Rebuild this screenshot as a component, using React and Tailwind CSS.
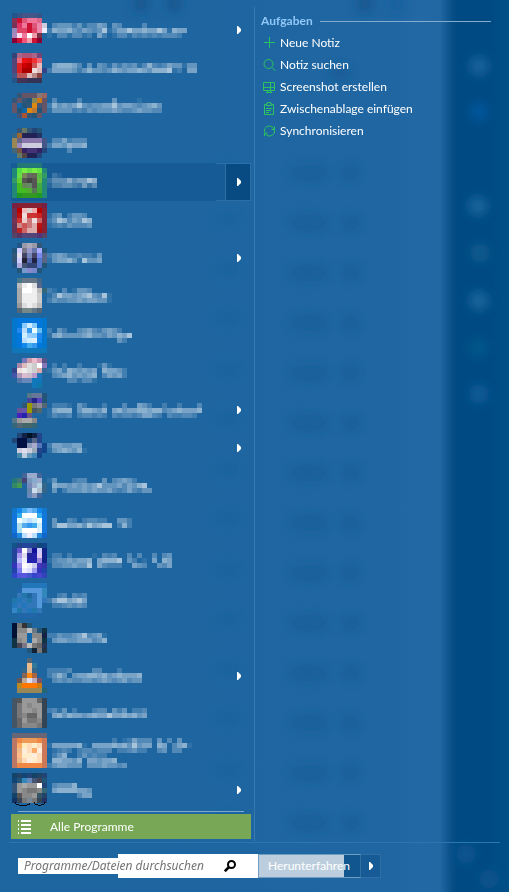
import React from "react";

// Each programme has a censored tile: `icon` holds one colour per 5px cell,
// `text` holds one brightness digit per 5px cell. `iy` and `ty` are the first
// cell row, measured from the top of the 38px list row.
const programs = [
  { iy: 2, icon: ["258 358 458 458 458 358 ...", "835 c13 d57 e79 e79 d68 ...", "735 d36 e79 c13 d57 e8a ccd", "98b d46 d46 c13 d46 e8a eef", "a8b fde e79 fff e9a 734 ...", "803 c13 e57 e9a c13 803 ..."], ty: 12, text: ["03444241335404300003", "2655643543471355755655751655", "1033133120520133132323233320"], menu: true },
  { iy: 4, icon: ["347 a68 a57 a57 a68 747 ...", "547 e67 e11 d11 e33 e67 ...", "547 d22 c00 b00 c55 ebb ...", "547 d22 a00 a00 edd dbb 348", "458 b55 b55 dbb b88 844 ...", "258 435 435 335 335 335 ..."], ty: 14, text: ["0566653040431424341363235441440", "2555542464434654556546667120550"] },
  { iy: 6, icon: ["... 357 656 656 656 877 966", "357 656 357 257 885 c71 656", "656 16a 257 357 d81 457 656", "656 257 16a d81 b73 257 656", "... 457 a53 357 257 656 ..."], ty: 11, text: ["0300003000000400001", "26454574344557455434564", "14444232434445433454433"] },
  { iy: 3, icon: ["... 357 676 357 247 257 ...", "368 963 225 225 225 236 ...", "985 668 87a 87a 87a 87a 458", "985 98b ccd ccd ccd ccd 458", "467 754 326 437 437 326 247", "... 676 544 225 225 247 ..."], ty: 13, text: ["03352333", "25546556", "00003"] },
  { iy: 0, icon: ["... 277 277 277 277 277 ...", "287 5d4 7e4 6d4 7e4 6d4 287", "287 6d4 785 666 665 5b4 396", "396 6c3 555 444 555 6b4 287", "287 4b2 685 686 555 4a4 287", "287 4b2 4b2 5a3 575 4a3 287", "287 292 392 392 392 292 287"], ty: 10, text: ["021", "2444645576", "1334432524"], menu: true, active: true },
  { iy: 2, icon: ["724 823 823 823 823 823 724", "635 b00 ebb dcc eaa b00 823", "635 b11 edd c33 c33 c22 823", "735 c33 ecc c77 edd c66 823", "635 c88 c55 c77 daa b11 823", "635 b22 c66 daa daa a11 823", "546 536 547 547 547 537 546"], ty: 12, text: ["134024430", "247635476", "123243334"] },
  { iy: 4, icon: ["... 258 99a aab 99a 357 ...", "257 ccf 778 99c 67a aaf 257", "357 dde 446 78b 446 78e 568", "357 ccf 223 56a 224 57c 568", "258 aad 457 347 347 57c 257", "... 257 79c 88c 78c 257 ..."], ty: 14, text: ["24542232214", "14556417445"], menu: true },
  { iy: 1, icon: ["... 478 678 678 678 468 ...", "... bbb eee fff ddd 568 ...", "... aaa fff fff eee bbb 367", "... aaa eee eee eee ccc ...", "... aaa eee eee eee ccc ...", "... 999 ddd eee ddd bbb ...", "... 567 788 788 678 567 ..."], ty: 11, text: ["2103014430", "1375545674371", "2433445455441"] },
  { iy: 3, icon: ["07c 07d 07d 07d 07d 07d 07c", "07c 07d 8cf cef 8cf 07d 07c", "07c 28e bdf 39e eff 6be 07c", "07c 07d cef 9cf 8cf 28e 07c", "07c 07d bdf cef def 18e 07c", "07c 07d 18e 4ae 39e 07d 07c", "17b 17b 17b 17b 17b 17b 17b"], ty: 13, text: ["20420034532454200", "15644445644354657", "00000000000000420"] },
  { iy: 5, icon: ["... ... 77b c9a ebc c9b 558", "... a8a dbb ddd ccc fff 87b", "348 edd eee ddd ccc daa 369", "45a a9b dbc cbc b9c 27b ...", "... 57a 68b 68b 17b 17b ...", "... ... ... ... 17b 17a ..."], ty: 10, text: ["0202002000141", "1452654545065542", "0345645456035452", "0000331331"] },
  { iy: 2, icon: ["... ... ... 578 679 679 257", "... ... ... 449 228 54b 257", "... ... 357 990 777 889 567", "... 659 65a 990 456 566 ...", "... 42b 22a 658 ... ... ...", "578 999 aaa aaa 888 ... ...", "367 567 466 466 367 ... ..."], ty: 12, text: ["0222104200020003005420020020003", "1566604665460564556656634565556", "132230233232032332355320322332"], menu: true },
  { iy: 4, icon: ["... 247 124 012 124 248 ...", "247 014 014 247 568 248 ...", "... 014 014 89b aac 57b 148", "... ccd dde ccd 9ab 248 148", "... 48a bcd 69b 48b 148 ..."], ty: 14, text: ["2554455", "14565461"], menu: true },
  { iy: 6, icon: ["... ... 469 9ac 9ac 469 ...", "277 477 447 79b 8ac 9ac 269", "386 495 ... 78b 9ac acd 368", "... ... ... 68a cde abc 368", "... ... ... 68b 89b 469 ..."], ty: 11, text: ["14000233000403454200", "065545454574445354670", "040244454544532353244"] },
  { iy: 3, icon: ["17c 18e 4ae 7bf 5ae 18e 17c", "17d 3ae fff fff fff 3ae 17d", "17d eff cef bdf cef eff 17d", "17d ade 5ae 39e 4ae cef 17d", "17d ade fff fff fff def 17d", "16c 28d bdf eef bdf 28d 16c"], ty: 13, text: ["04003202332200442", "04775564756770262"] },
  { iy: 0, icon: ["158 248 249 249 248 147 148", "249 65c fff 88c 119 ccf 128", "249 a9e dde 229 22a dce 128", "249 bbf eef 22a 22a 98d 128", "33b 98e fff eef cce 43b 33a", "24a 77e eef ddf 99e 33b 24a", "34c 55d 55d 45c 34c 44c 34b"], ty: 10, text: ["0220200001032300303003034", "1344545560566670420105065", "0334454470532220054300435"] },
  { iy: 2, icon: ["... ... 27b 27b 27b 27b 27b", "... 26a 59d 59d 59d 59d 38b", "... 37b 27a ... 37b 59d 38b", "27a 27b 37b 27a 37b 59d 37b", "27b 37b 27b 37b 37b 59d ...", "38c 27a 37b 27b 27a 37b ...", "... 26a 26a 26a 26a ... ..."], ty: 12, text: ["00230323", "25775675", "02234343"] },
  { iy: 4, icon: ["013 777 333 257 ... ... ...", "013 888 888 bbb 678 257 134", "013 999 999 16a 888 888 124", "134 888 999 16a aaa 888 134", "134 445 778 bbb 777 666 235", "... ... ... 257 123 777 234"], ty: 14, text: ["224334573451", "045544555346"] },
  { iy: 1, icon: ["... ... ... 567 ... ... ...", "... ... ... eb8 379 ... ...", "... ... 368 db9 368 ... ...", "... ... 865 f81 a64 ... ...", "... 655 ba9 dde bab 756 ...", "... b82 f70 f70 f70 c71 ...", "... 985 985 985 985 985 267"], ty: 11, text: ["222230000330002", "2464045566564565556", "0343433443454345344"], menu: true },
  { iy: 3, icon: ["456 555 999 999 999 666 345", "456 777 999 888 999 999 345", "456 777 999 999 888 999 345", "456 777 888 666 666 999 345", "456 666 999 777 777 888 345", "456 666 888 888 888 777 345"], ty: 13, text: ["23140200023304240223", "05646554565575565645"] },
  { iy: 0, icon: ["667 667 667 667 667 667 667", "b76 e84 e95 e95 e95 e84 c75", "b76 fa6 feb fdb fec fdb c75", "b76 eb8 fed fdb fa6 fed c75", "b76 fb8 fec fec fed fdb c75", "b76 eb8 fdb fed fec fdb c75", "b76 e84 e84 e84 e84 e84 c75"], ty: 5, text: ["0000000000000201253330403040", "155555610555565647455065035610", "0123202332333022342200340330", "02460024232200", "0665546055455600", "2455444044454434"] },
  { iy: 2, icon: ["146 246 147 247 146 246 247", "147 257 38b 68b 457 445 257", "357 999 aaa 999 999 fff 247", "357 999 888 777 777 888 367", "146 555 888 888 999 356 246", "136 345 777 789 777 345 236"], ty: 12, text: ["034446", "056666554", "000000355"], menu: true, feet: true },
];

const levels = [0, 0.08, 0.16, 0.23, 0.31, 0.4, 0.49, 0.61];

function Mosaic({ item }) {
  return (
    <svg className="block h-full w-full overflow-visible" shapeRendering="crispEdges" aria-hidden="true">
      {item.icon.flatMap((row, r) =>
        row.split(" ").map((c, k) =>
          c === "..." ? null : <rect key={`i${r}-${k}`} x={1 + k * 5} y={item.iy + r * 5} width="5" height="5" fill={`#${c}`} />
        )
      )}
      {item.text.flatMap((row, r) =>
        [...row].map((c, k) =>
          c === "0" ? null : <rect key={`t${r}-${k}`} x={36 + k * 5} y={item.ty + r * 5} width="5" height="5" fill="#fff" fillOpacity={levels[Number(c)]} />
        )
      )}
      {item.feet && (
        <path d="M4 31v1q1 2 4 2h8q3 0 3-2M23 31v1q1 2 4 2h3q4 0 4-3" fill="none" stroke="#05080f" strokeWidth="1" />
      )}
    </svg>
  );
}

function Triangle() {
  return (
    <svg className="h-2 w-1" viewBox="0 0 4 8" fill="#fff" aria-hidden="true">
      <path d="M0 0h1l3 3v2l-3 3h-1z" />
    </svg>
  );
}

const tasks = [
  { label: "Neue Notiz", icon: <path d="M6.5 1v11M1 6.5h11" /> },
  { label: "Notiz suchen", icon: <><circle cx="5.5" cy="6" r="4.5" /><path d="M9 9.500l3.500 3.500" /></> },
  { label: "Screenshot erstellen", icon: <path d="M.5 2.5h11v8H.5zM7.5 2.5v8M.5 7.5h11M4.5 10.5v2M7.5 10.5v2M3 12.5h6" /> },
  { label: "Zwischenablage einfügen", icon: <path d="M3.5 2.5h-2v10h9v-10h-2M3.5 1.5h1V.5h3v1h1v2h-5zM3 6.500h6M3 8.500h5M3 10.500h3" /> },
  { label: "Synchronisieren", icon: <path d="M1.500 8A5 5 0 0 1 10 3.500l1 1.500M11.500 6A5 5 0 0 1 3 10.500L2 9.500M11.500 2.500v3h-3M1.500 12V9h3" /> },
];

const spots = [
  [479, 66, "#14619a"], [479, 112, "#00559a"], [478, 206, "#17649a"], [480, 253, "#085a8c"],
  [479, 301, "#17649a"], [478, 348, "#06568a"], [479, 394, "#0b5a96"], [466, 854, "#0b5590"], [489, 879, "#07538c"],
];
const smudges = Array.from({ length: 14 }, (_, i) => 173 + i * 50);

function Backdrop() {
  return (
    <svg className="absolute inset-0 -z-10 h-full w-full" aria-hidden="true">
      <defs>
        <filter id="soft" x="-100%" y="-100%" width="300%" height="300%"><feGaussianBlur stdDeviation="5" /></filter>
      </defs>
      {spots.map(([x, y, c]) => <circle key={y} cx={x} cy={y} r="10" fill={c} filter="url(#soft)" />)}
      {smudges.map((y) => (
        <g key={y} fill="#185d96" filter="url(#soft)" opacity=".7">
          <ellipse cx="309" cy={y} rx="20" ry="8" />
          <ellipse cx="351" cy={y} rx="9" ry="8" />
        </g>
      ))}
      {smudges.map((y) => <ellipse key={y} cx="228" cy={y - 4} rx="14" ry="7" fill="#18629c" filter="url(#soft)" opacity=".6" />)}
      <g fill="#15568f" filter="url(#soft)">
        <circle cx="141" cy="4" r="8" /><circle cx="174" cy="4" r="8" />
        <circle cx="365" cy="4" r="8" /><circle cx="397" cy="4" r="8" fill="#17609e" />
        <ellipse cx="340" cy="73" rx="10" ry="7" opacity=".6" />
      </g>
    </svg>
  );
}

export default function App() {
  return (
    <main className="relative isolate flex min-h-screen flex-col overflow-hidden bg-[#1f66a2] bg-[linear-gradient(90deg,#1e66a0_0px,#1f66a2_395px,#2369a5_420px,#2167a2_440px,#0a5089_451px,#004a83_457px,#004a83_490px,#005087_509px)] font-[Lato,sans-serif] text-xs text-white">
      <Backdrop />
      <div className="flex">
        <nav className="mt-[7px] w-[255px] shrink-0 border-r border-[#3479af] pt-1 pr-[3px] pb-[2px] pl-[11px]" aria-label="Programme">
          <ul>
            {programs.map((item, i) => (
              <li key={i} className={item.active ? "flex h-[38px] bg-[#165b95]" : "flex h-[38px]"}>
                <button type="button" aria-label={`Programm ${i + 1}`} className="h-[38px] flex-1">
                  <Mosaic item={item} />
                </button>
                {item.active && <span className="w-[9px] border-y border-[#2c70a8]" />}
                {item.menu && (
                  <button type="button" aria-label="Untermenü" className={item.active ? "flex w-[26px] items-center justify-center border border-[#2c70a8] bg-[#084b82] pl-[2px]" : "flex w-[26px] items-center justify-center pl-[2px]"}>
                    <Triangle />
                  </button>
                )}
              </li>
            ))}
          </ul>
          <hr className="mx-[7px] mt-[2px] mb-[2px] border-[#7eaacd]" />
          <button type="button" className="flex h-[25px] w-full items-center gap-[19px] bg-[#78a855] pl-[7px]">
            <svg className="h-[14px] w-[13px]" viewBox="0 0 13 14" fill="#fff" shapeRendering="crispEdges" aria-hidden="true">
              {[0, 4, 8, 12].map((y) => (
                <g key={y}><rect y={y} width="1" height="2" /><rect x="3" y={y} width="10" height="2" /></g>
              ))}
            </svg>
            <span>Alle Programme</span>
          </button>
        </nav>
        <section className="min-w-0 flex-1 pt-[10px] pr-[18px] pl-[6px]">
          <h2 className="flex h-[22px] items-center gap-[7px] font-bold text-[#90c8f8]">
            Aufgaben
            <span className="h-px flex-1 bg-[#82abce]" />
          </h2>
          <ul>
            {tasks.map((t) => (
              <li key={t.label}>
                <button type="button" className="flex h-[22px] items-center gap-1 pl-[2px] whitespace-nowrap">
                  <svg className="h-[14px] w-[13px]" viewBox="0 0 13 14" fill="none" stroke="#2cc45c" strokeWidth="1" aria-hidden="true">{t.icon}</svg>
                  {t.label}
                </button>
              </li>
            ))}
          </ul>
        </section>
      </div>
      <footer className="mt-px mr-[9px] ml-[9px] flex border-t border-[#2877b1] pt-[11px] pl-[9px]">
        <form className="flex h-6 w-[240px] items-center bg-[linear-gradient(#fff,#fff),linear-gradient(#fff,#fff)] bg-[size:100px_16px,140px_24px] bg-[position:0px_4px,100px_0px] bg-no-repeat pr-[22px] pl-[6px]">
          <input type="search" aria-label="Programme/Dateien durchsuchen" placeholder="Programme/Dateien durchsuchen" className="h-4 min-w-0 flex-1 font-['Noto_Sans',sans-serif] text-xs text-black italic outline-none placeholder:text-[#747474]" />
          <button type="submit" aria-label="Suchen" className="ml-2">
            <svg className="h-3 w-3" viewBox="0 0 12 12" fill="none" stroke="#000" strokeWidth="2" aria-hidden="true">
              <circle cx="7.500" cy="4.500" r="3.500" />
              <path d="M5 7L.800 11.200" strokeWidth="2.600" />
            </svg>
          </button>
        </form>
        <button type="button" className="h-6 w-[103px] border border-[#6f9dc3] border-r-[#2f6fa4] bg-[linear-gradient(#bccedd,#bccedd)] bg-[size:85px_24px] bg-[#12568f] bg-no-repeat pl-[9px] text-left">
          Herunterfahren
        </button>
        <button type="button" aria-label="Weitere Optionen" className="flex h-6 w-5 items-center justify-center border border-l-0 border-[#2f6fa4] bg-[#165b95]">
          <Triangle />
        </button>
      </footer>
    </main>
  );
}
